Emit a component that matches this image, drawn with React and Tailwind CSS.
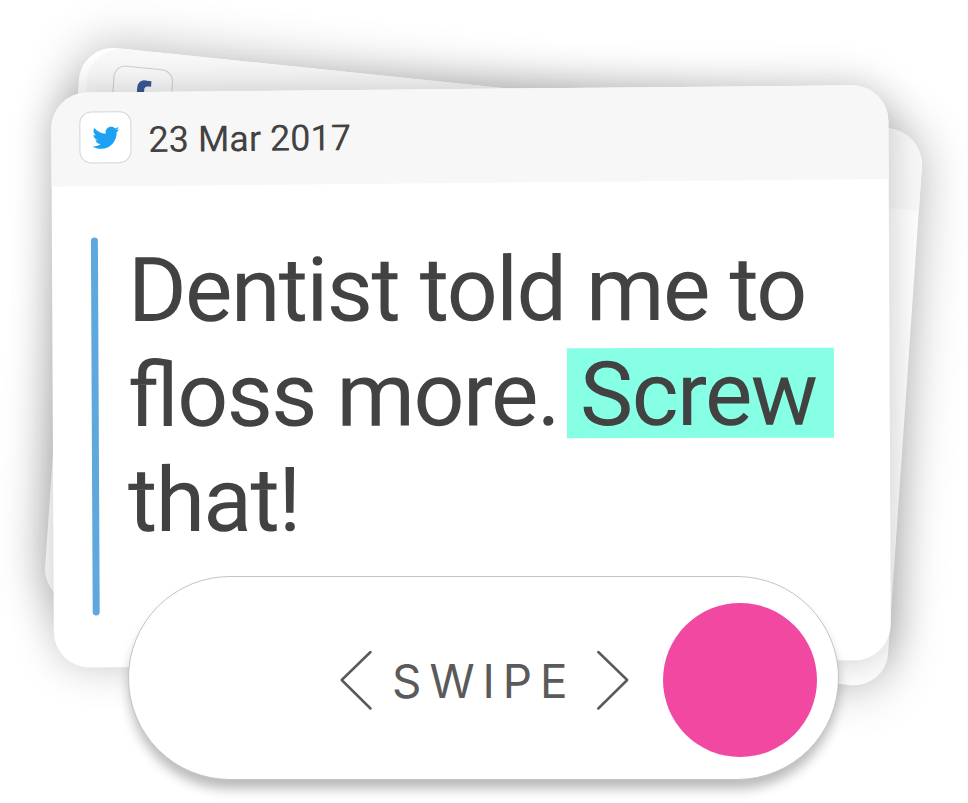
import { FaTwitter, FaFacebookF } from "react-icons/fa";

function BackCard() {
  return (
    <article className="absolute left-0 top-0 flex h-[575px] w-[837px] origin-top-left flex-col overflow-visible rounded-[36px] bg-white shadow-[0_0_52px_rgba(0,0,0,0.29)] [transform:matrix(1.0072,0.1043,-0.0672,0.969,81.3,44.4)]">
      <header className="ml-2 flex h-[82px] items-start rounded-t-[36px] bg-[#f9f9f9] pl-[26px] pt-[17px]">
        <span className="flex size-[59px] justify-center rounded-xl border-[1.5px] border-[#d0d0d0] bg-[#fbfbfb] pr-[3px] pt-[12px]">
          <FaFacebookF className="size-[36px] text-[#3b5998]" />
        </span>
      </header>
    </article>
  );
}

function FrontCard() {
  return (
    <article className="absolute left-0 top-0 flex h-[575px] w-[837px] origin-top-left flex-col rounded-[36px] bg-white shadow-[0_0_42px_rgba(0,0,0,0.22)] [transform:matrix(1,-0.0093,0.0048,1,51.2,92.8)]">
      <header className="flex h-[94px] items-start rounded-t-[36px] bg-[#f7f7f7] pl-7 pt-[19px]">
        <span className="flex size-[52px] items-center justify-center rounded-xl border-[1.5px] border-[#d4d4d4] bg-white">
          <FaTwitter className="size-[27px] text-[#1da1f2]" />
        </span>
        <time className="ml-[17px] mt-[7px] whitespace-nowrap text-[36px] leading-[44px] text-[#424242]">
          23 Mar 2017
        </time>
      </header>
      <div className="flex pl-[39px] pt-[51px]">
        <span className="h-[378px] w-[6.5px] shrink-0 rounded-full bg-[#5ea8dd]" />
        <p className="ml-[30px] origin-top-left whitespace-nowrap pt-px text-[89.5px] leading-[105px] tracking-[-1.55px] text-[#424242] [font-feature-settings:'liga'_1] [transform:matrix(1,0.0073,-0.0048,1,0,0)]">
          Dentist told me to
          <br />
          floss more.{" "}
          <mark className="-ml-[12.5px] mt-[5.5px] inline-block h-[90px] w-[267px] bg-[#87ffe5] pl-[13px] align-top leading-[94px] text-[#424242]">
            Screw
          </mark>
          <br />
          that!
        </p>
      </div>
    </article>
  );
}

function SwipeControl() {
  return (
    <div className="absolute left-[128px] top-[576px] flex h-[204px] w-[711px] items-center rounded-full border-[1.5px] border-[#c4c4c4] bg-white pl-[210px] pt-1 text-[#5a5a5a] shadow-[0_10px_12px_-1px_rgba(0,0,0,0.27)]">
      <svg className="h-[62px] w-[36px]" viewBox="0 0 36 62" fill="none" stroke="currentColor" strokeWidth="2.5" strokeLinecap="round" strokeLinejoin="round">
        <path d="M31.5 3 2.7 31 31.5 59.5" />
      </svg>
      <span className="ml-[17px] w-[186px] whitespace-nowrap pt-[3px] font-['Inter',sans-serif] text-[45.8px] leading-[56px] tracking-[8px]">SWIPE</span>
      <svg className="ml-[16px] h-[62px] w-[36px]" viewBox="0 0 36 62" fill="none" stroke="currentColor" strokeWidth="2.5" strokeLinecap="round" strokeLinejoin="round">
        <path d="M4.3 3 33.2 31 4.3 59.5" />
      </svg>
      <span className="ml-[33px] size-[154px] rounded-full bg-[#f148a1]" />
    </div>
  );
}

export default function App() {
  return (
    <main className="relative h-[803px] w-[968px] overflow-hidden bg-white font-['Roboto',sans-serif]">
      <BackCard />
      <FrontCard />
      <SwipeControl />
    </main>
  );
}
